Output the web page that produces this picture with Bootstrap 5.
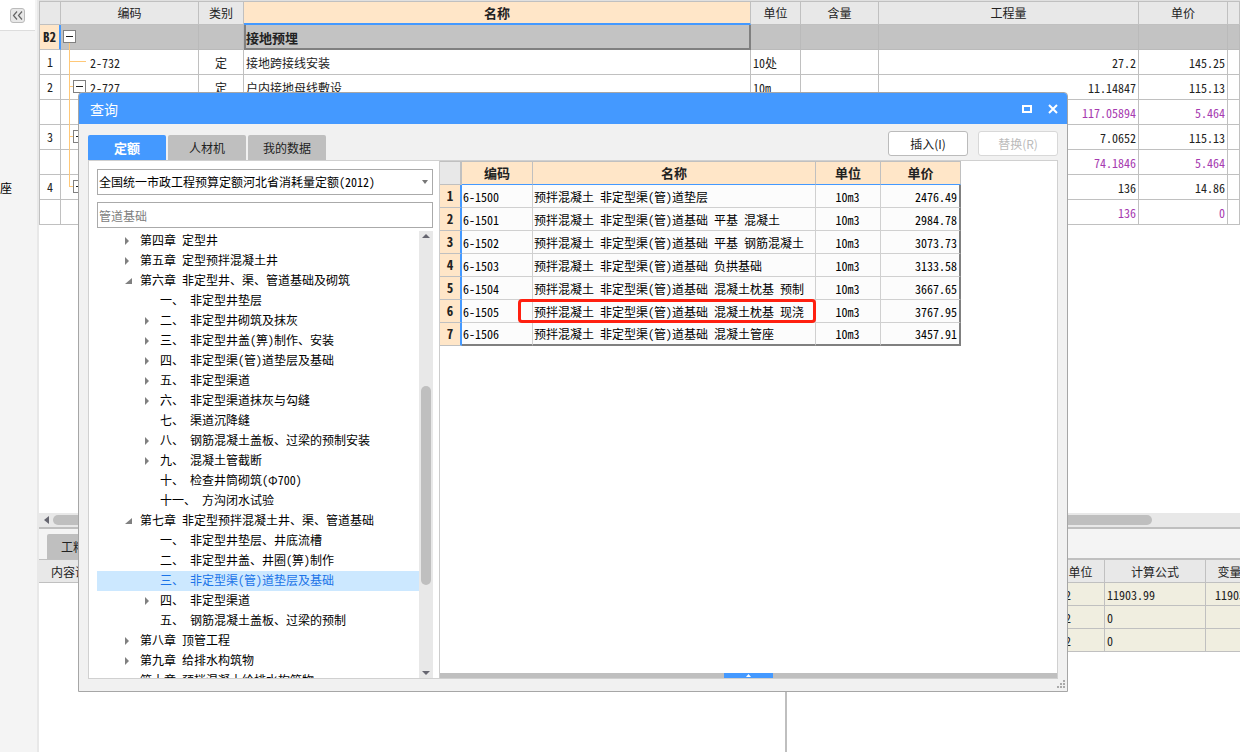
<!DOCTYPE html>
<html lang="zh-CN">
<head>
<meta charset="utf-8">
<meta name="viewport" content="width=device-width, initial-scale=1">
<title>查询</title>
<link href="https://cdn.jsdelivr.net/npm/bootstrap@5.3.0/dist/css/bootstrap.min.css" rel="stylesheet">
<style>
  :root { --blue:#4499ff; --line:#c0c0c0; --head:#e8e8e8; --peach:#ffe6c8; --bar:#bfbfbf; --panel:#f1f1f1; }
  body { font-family:"Noto Sans Mono CJK SC","Noto Sans CJK SC",sans-serif; font-size:12px; line-height:20px; color:#222; background:#fff; }
  button, input, select { font:inherit; }

  .rail { width:39px; background:#f4f4f4; border-right:2px solid #e8e8e8; }
  .rail-top { height:31px; width:35px; background:#fff; border-bottom:1px solid #ddd; padding:8px 0 0 10px; }
  .rail-btn { width:15px; height:15px; border:1px solid #bbb; border-radius:3px; background:#e8e8e8; }
  .rail-text { margin-top:147px; color:#000; }

  .sheet { border-collapse:separate; border-spacing:0; table-layout:fixed; width:100%; white-space:nowrap; }
  .sheet th, .sheet td { border:0 solid var(--line); border-width:0 1px 1px 0; padding:1px 2px 0; overflow:hidden; font-weight:400; }
  .sheet thead th { background:var(--head); text-align:center; }
  .c22 { width:22px; } .c45 { width:45px; } .c48 { width:48px; } .c50 { width:50px; } .c60 { width:60px; } .c65 { width:65px; }
  .c71 { width:71px; } .c78 { width:78px; } .c80 { width:80px; } .c89 { width:89px; } .c101 { width:101px; }
  .c138 { width:138px; } .c260 { width:260px; } .c12 { width:12px; }

  .upper { border-top:1px solid #e0e0e0; }
  .bill thead th { height:24px; border-top:1px solid var(--line); padding-top:0; }
  .bill tbody th, .bill tbody td { height:25px; }
  .bill tr > :first-child { border-left:1px solid var(--line); text-align:center; padding:0; }
  .bill thead .cur { background:var(--peach); font-weight:700; font-size:13px; border-bottom:2px solid var(--blue); }
  .bill .sel td { background:#c3c3c3; border-color:#bababa; }
  .bill .sel th { background:var(--peach); font-weight:700; font-size:13px; border-right:2px solid var(--blue); }
  .bill .sel .cur { font-weight:700; font-size:13px; border:solid #808080; border-width:0 2px 2px 2px; padding:2px 0 0; }
  .bill td.code { padding-left:29px; }
  .bill .sel td.code { position:relative; overflow:visible; }
  .lines { position:absolute; left:0; top:0; }
  .extra { color:#a63ab0; }

  .hbar { height:16px; background:var(--head); border-bottom:2px solid var(--bar); padding:1px 88px 2px 5px; }
  .hbar i { height:10px; border-radius:5px; background:var(--bar); }
  .lower { height:223px; }
  .lower-left { border-right:2px solid var(--bar); flex:0 0 748px; }
  .strip { height:31px; background:#f4f4f4; border-bottom:1px solid var(--line); padding:0 0 0 8px; }
  .strip.thick { border-bottom:2px solid var(--line); }
  .gray-tab { height:25px; border:0; border-radius:2px 2px 0 0; background:var(--bar); color:#222; padding:0 14px; }
  .detail thead th { height:23px; }
  .detail td { height:23px; background:#f0eee0; }
  .wide { width:calc(100% + 26px); }

  .query { position:absolute; left:78px; right:172px; top:92px; bottom:60px; background:var(--panel); border:1px solid #a6a6a6; border-radius:4px 4px 0 0; }
  .title-bar { height:31px; background:var(--blue); border-radius:3px 3px 0 0; color:#fff; font-size:14px; padding:0 9px 0 11px; }
  .title-bar button { border:0; background:none; padding:0; width:10px; height:10px; display:flex; }
  .tools { height:36px; padding:0 9px; }
  .tools .tab { width:78px; height:25px; border:0; border-radius:2px 2px 0 0; background:var(--bar); color:#222; padding:0; }
  .tools .tab.on { background:var(--blue); color:#fff; font-weight:700; font-size:13px; }
  .tab-row { gap:2px; }
  .act-row { gap:10px; padding-bottom:4px; }
  .act { width:80px; height:25px; border:1px solid #bbb; border-radius:3px; background:#fff; color:#222; padding:0; font-family:"Noto Sans CJK SC",sans-serif; }
  .act:disabled { color:#bbb; border-color:#d8d8d8; }
  .panes { margin:0 9px 12px; border:1px solid #d0d0d0; background:#fff; min-height:0; }
  .left-pane { flex:0 0 351px; border-right:1px solid #ccc; padding:8px 6px 0 8px; }
  .field { display:block; width:100%; height:26px; border:1px solid #aaa; border-radius:0; background:#fff; color:#000; padding:0 1px; appearance:none; outline:0; }
  .field::placeholder { color:#808080; opacity:1; }
  .drop { position:absolute; right:5px; top:11px; }
  .find { margin:7px 0 3px; }
  .tree { margin:0; padding:0; list-style:none; overflow:hidden; color:#000; white-space:nowrap; line-height:18px; }
  .tree li { height:20px; padding:0 0 2px 43px; display:flex; align-items:center; }
  .tree li.sub { padding-left:63px; }
  .tree .now { background:#cce8ff; color:#1a73e8; }
  .tree button { width:14px; height:12px; border:0; background:none; padding:2px 0 0; margin-left:-16px; margin-right:2px; display:flex; align-items:center; }
  .tree button svg { margin-left:1px; }
  .vbar { flex:0 0 14px; background:var(--head); padding:3px 0; }
  .vbar i { width:10px; border-radius:5px; background:var(--bar); height:199px; margin:148px 0 auto; }

  .result { max-width:521px; color:#000; background:#fcfcfc; }
  .result thead th { height:24px; background:var(--peach); color:#222; font-weight:700; font-size:13px; border-top:1px solid var(--line); border-bottom-color:var(--blue); padding-top:0; }
  .result thead th:first-child { background:var(--head); border-right:2px solid var(--line); border-bottom-color:var(--line); }
  .result td { height:23px; border-color:#d0d0d0; padding:2px 2px 0 1px; }
  .result tbody th { height:23px; background:var(--peach); color:#222; font-weight:700; font-size:13px; text-align:center; border-right:2px solid var(--blue); padding:0; }
  .result tbody td:last-child { border-right:2px solid #808080; }
  .result tbody tr:last-child td { border-bottom:2px solid #808080; padding-top:1px; }
  .result td.hit { position:relative; overflow:visible; }
  .ring { position:absolute; left:-15px; right:-1px; top:-1px; bottom:-1px; border:3px solid #ff2010; border-radius:4px; }
  .split { height:5px; background:var(--bar); padding-left:284px; }
  .split button { width:49px; height:5px; border:0; background:var(--blue); padding:0; display:flex; justify-content:center; align-items:center; }
  .grip { position:absolute; right:2px; bottom:3px; }
</style>
</head>
<body>
<div class="d-flex vh-100 overflow-hidden position-relative">
  <aside class="rail flex-shrink-0 overflow-hidden">
    <div class="rail-top"><button class="rail-btn d-flex align-items-center justify-content-center p-0" aria-label="收起">
      <svg width="11" height="9" viewBox="0 0 11 9" fill="none" stroke="#666" stroke-width="1.200"><path d="M5 .5 1.500 4.500 5 8.500M10 .5 6.500 4.500 10 8.500"/></svg></button></div>
    <div class="rail-text">座</div>
  </aside>

  <main class="d-flex flex-column flex-grow-1 overflow-hidden">
    <section class="upper flex-grow-1 overflow-hidden">
      <table class="sheet bill">
        <colgroup><col class="c22"><col class="c138"><col class="c45"><col><col class="c50"><col class="c78"><col class="c260"><col class="c89"><col class="c12"></colgroup>
        <thead><tr><th></th><th>编码</th><th>类别</th><th class="cur">名称</th><th>单位</th><th>含量</th><th>工程量</th><th>单价</th><th></th></tr></thead>
        <tbody>
          <tr class="sel"><th>B2</th><td class="code">
            <svg class="lines" width="30" height="170" viewBox="0 0 30 170" fill="none" shape-rendering="crispEdges">
              <path d="M8.500 18V162M8 36.500H25M8 61.500H12M8 111.500H12M8 161.500H12" stroke="#ffc878"/>
              <g fill="#fff" stroke="#808080"><path d="M2.500 5.500h12v12h-12zM12.500 55.500h12v12h-12zM12.500 105.500h12v12h-12zM12.500 155.500h12v12h-12z"/></g>
              <path d="M5 11.500h7M15 61.500h7M15 111.500h7M15 161.500h7" stroke="#222"/>
            </svg></td><td></td><td class="cur">接地预埋</td><td></td><td></td><td></td><td></td><td></td></tr>
          <tr><td>1</td><td class="code">2-732</td><td class="text-center">定</td><td>接地跨接线安装</td><td>10处</td><td></td><td class="text-end">27.2</td><td class="text-end">145.25</td><td></td></tr>
          <tr><td>2</td><td class="code">2-727</td><td class="text-center">定</td><td>户内接地母线敷设</td><td>10m</td><td></td><td class="text-end">11.14847</td><td class="text-end">115.13</td><td></td></tr>
          <tr class="extra"><td></td><td></td><td></td><td></td><td></td><td></td><td class="text-end">117.05894</td><td class="text-end">5.464</td><td></td></tr>
          <tr><td>3</td><td></td><td></td><td></td><td></td><td></td><td class="text-end">7.0652</td><td class="text-end">115.13</td><td></td></tr>
          <tr class="extra"><td></td><td></td><td></td><td></td><td></td><td></td><td class="text-end">74.1846</td><td class="text-end">5.464</td><td></td></tr>
          <tr><td>4</td><td></td><td></td><td></td><td></td><td></td><td class="text-end">136</td><td class="text-end">14.86</td><td></td></tr>
          <tr class="extra"><td></td><td></td><td></td><td></td><td></td><td></td><td class="text-end">136</td><td class="text-end">0</td><td></td></tr>
        </tbody>
      </table>
    </section>
    <div class="hbar d-flex align-items-center flex-shrink-0">
      <svg width="5" height="8" viewBox="0 0 5 8"><path d="M5 0v8L0 4z" fill="#666670"/></svg><i class="flex-grow-1 ms-1"></i>
    </div>
    <section class="lower d-flex flex-shrink-0">
      <div class="lower-left overflow-hidden">
        <div class="strip d-flex align-items-end"><button class="gray-tab">工料机显示</button></div>
        <table class="sheet detail"><thead><tr><th class="text-start ps-2"><span class="ps-1">内容说明</span></th></tr></thead></table>
      </div>
      <div class="flex-grow-1 overflow-hidden">
        <div class="strip thick"></div>
        <table class="sheet detail wide">
          <colgroup><col><col class="c48"><col class="c101"><col class="c60"></colgroup>
          <thead><tr><th></th><th>单位</th><th>计算公式</th><th>变量值</th></tr></thead>
          <tbody>
            <tr><td></td><td>m2</td><td>11903.99</td><td class="text-end">11903.99</td></tr>
            <tr><td></td><td>m2</td><td>0</td><td></td></tr>
            <tr><td></td><td>m2</td><td>0</td><td></td></tr>
          </tbody>
        </table>
      </div>
    </section>
  </main>

  <div class="query d-flex flex-column" role="dialog" aria-label="查询">
    <header class="title-bar d-flex align-items-center flex-shrink-0">
      <span class="me-auto">查询</span>
      <button aria-label="最大化" class="me-3"><svg width="10" height="10" viewBox="0 0 10 10"><path d="M1 2h8v6H1z" fill="none" stroke="#fff" stroke-width="2"/></svg></button>
      <button aria-label="关闭"><svg width="10" height="10" viewBox="0 0 10 10"><path d="m1 1 8 8M9 1 1 9" stroke="#fff" stroke-width="2"/></svg></button>
    </header>
    <div class="tools d-flex align-items-end flex-shrink-0">
      <nav class="tab-row d-flex me-auto"><button class="tab on">定额</button><button class="tab">人材机</button><button class="tab">我的数据</button></nav>
      <div class="act-row d-flex"><button class="act">插入(I)</button><button class="act" disabled>替换(R)</button></div>
    </div>
    <div class="panes d-flex flex-grow-1">
      <div class="left-pane d-flex flex-column">
        <div class="position-relative flex-shrink-0">
          <select class="field" aria-label="定额库"><option>全国统一市政工程预算定额河北省消耗量定额(2012)</option></select>
          <svg class="drop" width="6" height="4" viewBox="0 0 6 4"><path d="M0 0h6L3 4z" fill="#777"/></svg>
        </div>
        <input class="field find flex-shrink-0" type="text" placeholder="管道基础" aria-label="搜索">
        <div class="d-flex flex-grow-1 overflow-hidden">
          <ul class="tree flex-grow-1">
            <li><button aria-label="展开"><svg width="5" height="8"><path d="M0 0v8l4-4z" fill="#808080"/></svg></button>第四章 定型井</li>
            <li><button aria-label="展开"><svg width="5" height="8"><path d="M0 0v8l4-4z" fill="#808080"/></svg></button>第五章 定型预拌混凝土井</li>
            <li><button aria-label="收起"><svg width="7" height="7"><path d="M7 0v6H0z" fill="#808080"/></svg></button>第六章 非定型井、渠、管道基础及砌筑</li>
            <li class="sub">一、 非定型井垫层</li>
            <li class="sub"><button aria-label="展开"><svg width="5" height="8"><path d="M0 0v8l4-4z" fill="#808080"/></svg></button>二、 非定型井砌筑及抹灰</li>
            <li class="sub"><button aria-label="展开"><svg width="5" height="8"><path d="M0 0v8l4-4z" fill="#808080"/></svg></button>三、 非定型井盖(箅)制作、安装</li>
            <li class="sub"><button aria-label="展开"><svg width="5" height="8"><path d="M0 0v8l4-4z" fill="#808080"/></svg></button>四、 非定型渠(管)道垫层及基础</li>
            <li class="sub"><button aria-label="展开"><svg width="5" height="8"><path d="M0 0v8l4-4z" fill="#808080"/></svg></button>五、 非定型渠道</li>
            <li class="sub"><button aria-label="展开"><svg width="5" height="8"><path d="M0 0v8l4-4z" fill="#808080"/></svg></button>六、 非定型渠道抹灰与勾缝</li>
            <li class="sub">七、 渠道沉降缝</li>
            <li class="sub"><button aria-label="展开"><svg width="5" height="8"><path d="M0 0v8l4-4z" fill="#808080"/></svg></button>八、 钢筋混凝土盖板、过梁的预制安装</li>
            <li class="sub"><button aria-label="展开"><svg width="5" height="8"><path d="M0 0v8l4-4z" fill="#808080"/></svg></button>九、 混凝土管截断</li>
            <li class="sub">十、 检查井筒砌筑(Φ700)</li>
            <li class="sub">十一、 方沟闭水试验</li>
            <li><button aria-label="收起"><svg width="7" height="7"><path d="M7 0v6H0z" fill="#808080"/></svg></button>第七章 非定型预拌混凝土井、渠、管道基础</li>
            <li class="sub">一、 非定型井垫层、井底流槽</li>
            <li class="sub">二、 非定型井盖、井圈(箅)制作</li>
            <li class="sub now">三、 非定型渠(管)道垫层及基础</li>
            <li class="sub"><button aria-label="展开"><svg width="5" height="8"><path d="M0 0v8l4-4z" fill="#808080"/></svg></button>四、 非定型渠道</li>
            <li class="sub">五、 钢筋混凝土盖板、过梁的预制</li>
            <li><button aria-label="展开"><svg width="5" height="8"><path d="M0 0v8l4-4z" fill="#808080"/></svg></button>第八章 顶管工程</li>
            <li><button aria-label="展开"><svg width="5" height="8"><path d="M0 0v8l4-4z" fill="#808080"/></svg></button>第九章 给排水构筑物</li>
            <li>第十章 预拌混凝土给排水构筑物</li>
          </ul>
          <div class="vbar d-flex flex-column align-items-center">
            <svg width="8" height="4" viewBox="0 0 8 4"><path d="M0 4h8L4 0z" fill="#666670"/></svg>
            <i></i>
            <svg width="8" height="4" viewBox="0 0 8 4"><path d="M0 0h8L4 4z" fill="#666670"/></svg>
          </div>
        </div>
      </div>
      <div class="d-flex flex-column flex-grow-1">
        <table class="sheet result">
          <colgroup><col class="c22"><col class="c71"><col><col class="c65"><col class="c80"></colgroup>
          <thead><tr><th></th><th>编码</th><th>名称</th><th>单位</th><th>单价</th></tr></thead>
          <tbody>
            <tr><th>1</th><td>6-1500</td><td>预拌混凝土 非定型渠(管)道垫层</td><td class="text-center">10m3</td><td class="text-end">2476.49</td></tr>
            <tr><th>2</th><td>6-1501</td><td>预拌混凝土 非定型渠(管)道基础 平基 混凝土</td><td class="text-center">10m3</td><td class="text-end">2984.78</td></tr>
            <tr><th>3</th><td>6-1502</td><td>预拌混凝土 非定型渠(管)道基础 平基 钢筋混凝土</td><td class="text-center">10m3</td><td class="text-end">3073.73</td></tr>
            <tr><th>4</th><td>6-1503</td><td>预拌混凝土 非定型渠(管)道基础 负拱基础</td><td class="text-center">10m3</td><td class="text-end">3133.58</td></tr>
            <tr><th>5</th><td>6-1504</td><td>预拌混凝土 非定型渠(管)道基础 混凝土枕基 预制</td><td class="text-center">10m3</td><td class="text-end">3667.65</td></tr>
            <tr><th>6</th><td>6-1505</td><td class="hit">预拌混凝土 非定型渠(管)道基础 混凝土枕基 现浇<span class="ring"></span></td><td class="text-center">10m3</td><td class="text-end">3767.95</td></tr>
            <tr><th>7</th><td>6-1506</td><td>预拌混凝土 非定型渠(管)道基础 混凝土管座</td><td class="text-center">10m3</td><td class="text-end">3457.91</td></tr>
          </tbody>
        </table>
        <div class="split mt-auto"><button aria-label="展开详情"><svg width="5" height="3" viewBox="0 0 5 3"><path d="M0 3h5L2.500 0z" fill="#fff"/></svg></button></div>
      </div>
    </div>
    <svg class="grip" width="9" height="9" viewBox="0 0 9 9" fill="#aaa"><path d="M7 1h2v2H7zM7 4h2v2H7zM7 7h2v2H7zM4 4h2v2H4zM4 7h2v2H4zM1 7h2v2H1z"/></svg>
  </div>
</div>
<script src="https://cdn.jsdelivr.net/npm/bootstrap@5.3.0/dist/js/bootstrap.bundle.min.js"></script>
</body>
</html>
